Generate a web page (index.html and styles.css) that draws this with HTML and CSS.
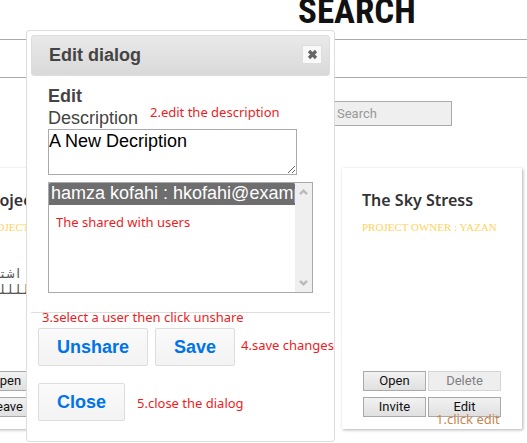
FILE: index.html
```html
<!DOCTYPE html>
<html lang="en">
<head>
<meta charset="utf-8">
<title>Search</title>
<link rel="stylesheet" href="styles.css">
</head>
<body>
<main class="page">
  <h1 class="page-title">SEARCH</h1>
  <div class="toolbar"></div>
  <form class="search"><input class="search-input" type="text" placeholder="Search" aria-label="Search"></form>
  <section class="cards">
    <article class="card">
      <h2 class="card-title">Project</h2>
      <p class="card-owner">PROJECT</p>
      <p class="card-text">اشترا<br>للللللللل</p>
      <div class="card-actions card-actions-member">
        <button type="button" class="small-button">Open</button>
        <button type="button" class="small-button">Leave</button>
      </div>
    </article>
    <article class="card">
      <h2 class="card-title">The Sky Stress</h2>
      <p class="card-owner">PROJECT OWNER : YAZAN</p>
      <div class="card-actions">
        <button type="button" class="small-button">Open</button>
        <button type="button" class="small-button" disabled>Delete</button>
        <button type="button" class="small-button">Invite</button>
        <button type="button" class="small-button">Edit</button>
      </div>
    </article>
  </section>

  <section class="dialog" role="dialog" aria-labelledby="dialog-title">
    <header class="dialog-header">
      <h2 class="dialog-title" id="dialog-title">Edit dialog</h2>
      <button type="button" class="close-icon" aria-label="Close dialog">
        <svg width="11" height="11" viewBox="0 0 11 11"><path d="M2 2 9 9M9 2 2 9" stroke="#666" stroke-width="3.2"/></svg>
      </button>
    </header>
    <div class="dialog-body">
      <h3 class="form-title">Edit</h3>
      <label class="form-label" for="description">Description</label>
      <textarea class="description" id="description">A New Decription</textarea>
      <div class="users">
        <select class="users-list" multiple size="5" aria-label="Shared with users">
          <option selected>hamza kofahi : hkofahi@example.com</option>
        </select>
        <div class="users-scroll">
          <svg width="9" height="8" viewBox="0 0 9 8"><path d="M1 6.2 4.5 2.7 8 6.2" fill="none" stroke="#bababa" stroke-width="2.4"/></svg>
          <svg width="9" height="8" viewBox="0 0 9 8"><path d="M1 1.8 4.5 5.3 8 1.8" fill="none" stroke="#bababa" stroke-width="2.4"/></svg>
        </div>
      </div>
    </div>
    <footer class="dialog-footer">
      <button type="button" class="button">Unshare</button>
      <button type="button" class="button">Save</button>
      <button type="button" class="button">Close</button>
    </footer>
  </section>

  <span class="note note-edit">1.click edit</span>
  <span class="note note-description">2.edit the description</span>
  <span class="note note-users">The shared with users</span>
  <span class="note note-unshare">3.select a user then click unshare</span>
  <span class="note note-save">4.save changes</span>
  <span class="note note-close">5.close the dialog</span>
</main>
</body>
</html>
```
FILE: styles.css
```css
* { box-sizing: border-box; }

body {
  margin: 0;
  background: #fff;
  font-family: "Liberation Sans", Arial, sans-serif;
  overflow: hidden;
}

h1, h2, h3, p { margin: 0; }

.page {
  position: relative;
  min-height: 100vh;
  overflow: hidden;
}

.page-title {
  height: 39px;
  padding-left: 298px;
  font: bold 35px/24px "Roboto Condensed", Roboto, sans-serif;
  color: #111;
}

.toolbar {
  height: 39px;
  border-top: 1px solid #aaa;
  border-bottom: 1px solid #aaa;
}

.search {
  display: flex;
  justify-content: flex-end;
  padding: 23px 75px 0 0;
}

.search-input {
  width: 122px;
  height: 25px;
  padding: 0 6px;
  border: 1px solid #aaa;
  background: #efefef;
  font: 13px Roboto, sans-serif;
}

.search-input::placeholder { color: #999; }

.cards {
  display: flex;
  justify-content: flex-end;
  gap: 199px;
  padding: 42px 5px 14px 0;
}

.card {
  display: flex;
  flex-direction: column;
  flex: 0 0 180px;
  height: 261px;
  padding: 20px;
  padding-bottom: 12px;
  box-shadow: 1px 1px 3px rgba(0, 0, 0, 0.3);
}

.card-title {
  font: 600 16px/24px "Noto Sans", sans-serif;
  color: #333;
  white-space: nowrap;
}

.card-owner {
  margin-top: 7px;
  font: 11px/16px "Liberation Serif", serif;
  color: #ffd35e;
  white-space: nowrap;
}

.card-text {
  margin-top: 31px;
  font: 13px/16px "DejaVu Sans Mono", monospace;
  color: #555;
  white-space: nowrap;
}

.card-actions {
  display: grid;
  grid-template-columns: 63px 73px;
  gap: 6px 2px;
  margin-top: auto;
  padding-left: 1px;
}

.card-actions-member { grid-template-columns: 44px; }

.small-button {
  height: 20px;
  padding: 0;
  border: 1px solid #a9a9a9;
  background: linear-gradient(#f2f2f2, #e0e0e0);
  font: 13px/16px Roboto, sans-serif;
  color: #111;
}

.small-button:disabled {
  border-color: #d5d5d5;
  background: #eee;
  color: #808080;
}

.dialog {
  position: absolute;
  top: 30px;
  left: 26px;
  width: 309px;
  padding: 4px;
  border: 1px solid #ddd;
  border-radius: 3px;
  background: #fff;
  color: #444;
}

.dialog-header {
  display: flex;
  align-items: center;
  justify-content: space-between;
  height: 41px;
  padding: 0 7px 2px 17px;
  border: 1px solid #ddd;
  border-radius: 3px;
  background: linear-gradient(#e9e9e9, #d9d9d9);
}

.dialog-title { font-size: 18px; line-height: 24px; }

.close-icon {
  display: flex;
  align-items: center;
  justify-content: center;
  width: 20px;
  height: 19px;
  padding: 0;
  border: 1px solid #ddd;
  background: #f9f9f9;
}

.dialog-body { padding: 10px 17px 19px; }

.form-title { font-size: 18px; line-height: 21px; }

.form-label {
  display: block;
  font-size: 18px;
  line-height: 22px;
}

.description {
  display: block;
  width: 249px;
  height: 46px;
  padding: 1px 0;
  border: 1px solid #a9a9b0;
  font: 18px/21px "Liberation Sans", Arial, sans-serif;
  color: #000;
}

.users {
  display: flex;
  width: 265px;
  height: 111px;
  margin-top: 7px;
  border: 1px solid #a9a9b0;
}

.users-list {
  flex: 1;
  min-width: 0;
  padding: 0;
  border: 0;
  outline: 0;
  overflow: hidden;
  background: #fff;
  font: 18px/22px "Liberation Sans", Arial, sans-serif;
}

.users-list option { min-height: 22px; padding: 0 0 0 2px; }

.users-list option:checked {
  background: #6e6e6e linear-gradient(#6e6e6e, #6e6e6e);
  color: #fff;
}

.users-scroll {
  display: flex;
  flex-direction: column;
  align-items: center;
  justify-content: space-between;
  width: 17px;
  padding: 5px 0;
  background: #efefef;
}

.dialog-footer {
  display: flex;
  flex-wrap: wrap;
  gap: 17px 7px;
  padding: 15px 7px 16px;
  border-top: 1px solid #ddd;
}

.button {
  height: 38px;
  padding: 0 18px;
  border: 1px solid #ddd;
  border-radius: 2px;
  background: linear-gradient(#fafafa, #f3f3f3);
  font: bold 18px/24px "Liberation Sans", Arial, sans-serif;
  color: #0073ea;
}

.note {
  position: absolute;
  font: 13px/18px "Noto Sans", sans-serif;
  color: #ed1c24;
  white-space: nowrap;
}

.note-edit { top: 410px; left: 436px; color: #c8854c; }
.note-description { top: 103px; left: 150px; }
.note-users { top: 213px; left: 56px; }
.note-unshare { top: 308px; left: 42px; }
.note-save { top: 336px; left: 241px; }
.note-close { top: 394px; left: 137px; }
```
